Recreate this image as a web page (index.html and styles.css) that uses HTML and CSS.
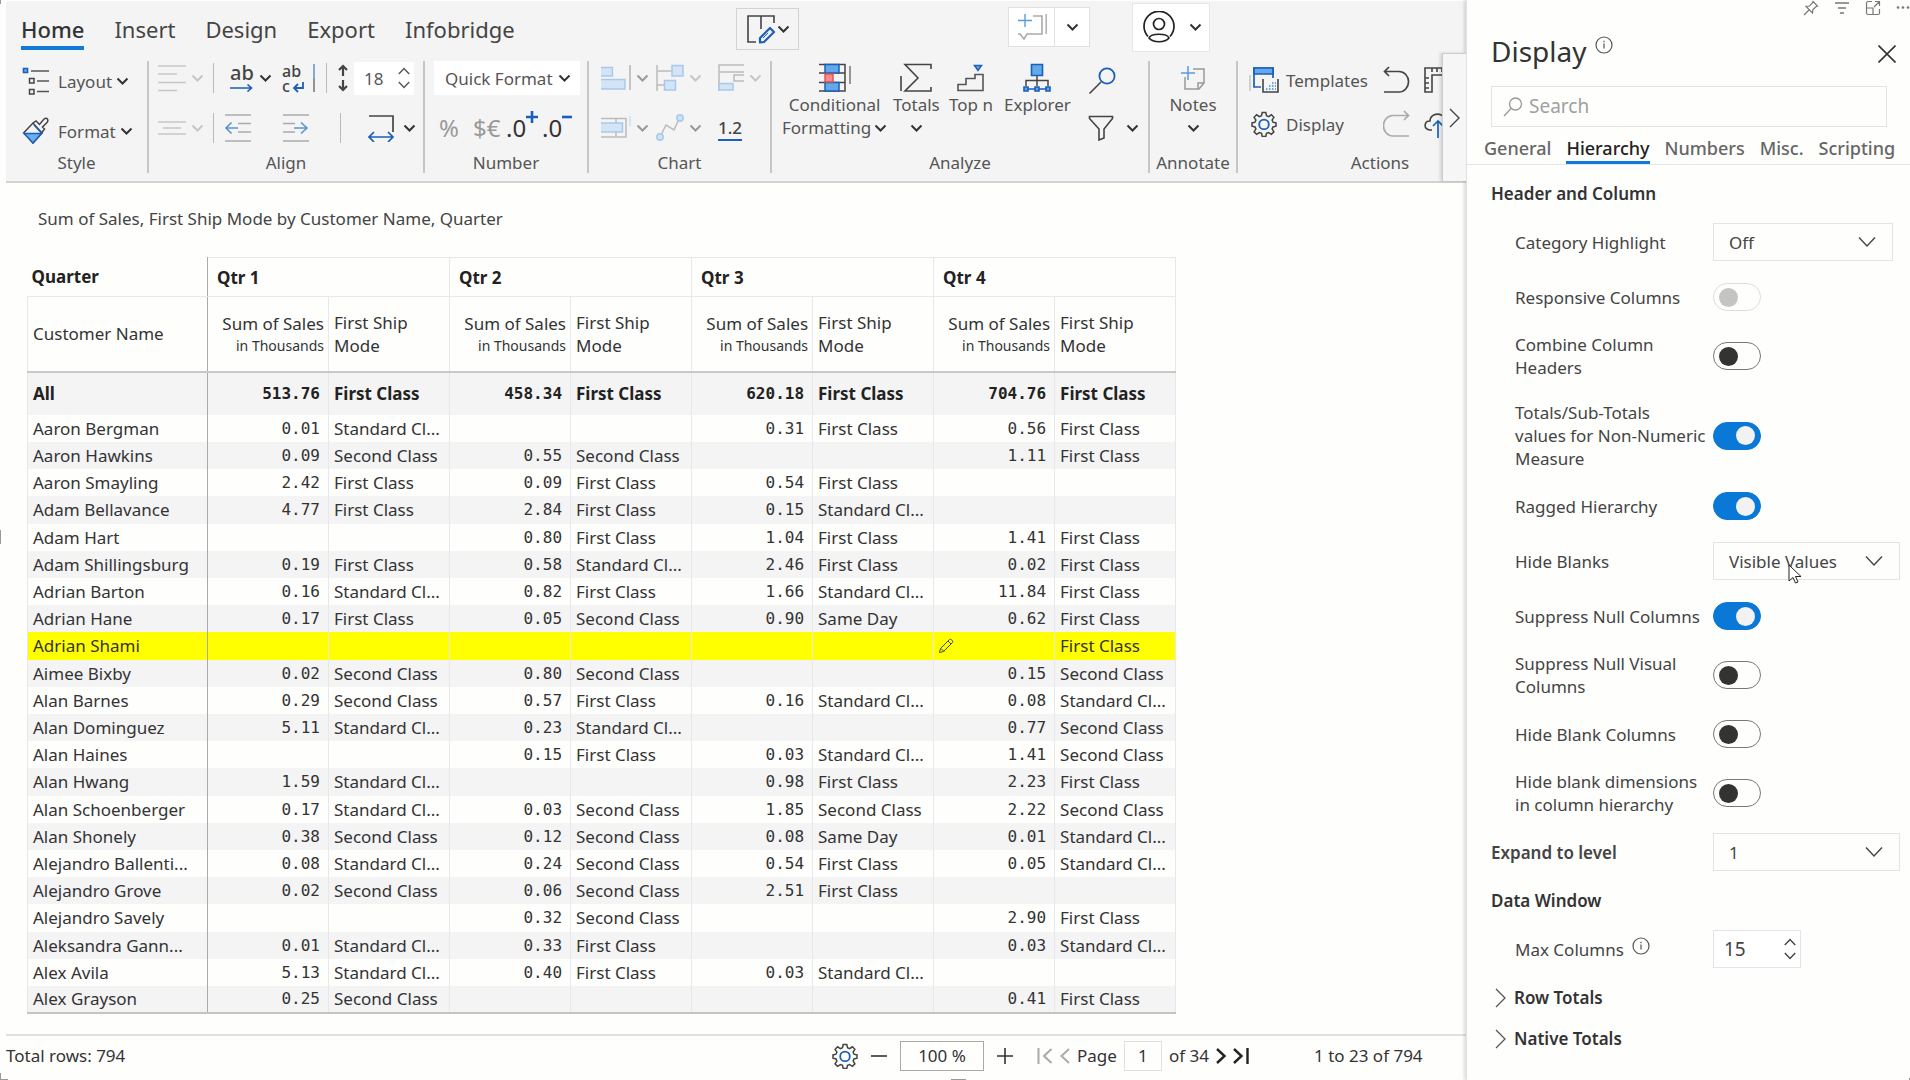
FILE: index.html
```html
<!DOCTYPE html>
<html lang="en">
<head>
<meta charset="utf-8">
<title>Sales matrix</title>
<link rel="stylesheet" href="styles.css">
</head>
<body>
<svg class="defs" aria-hidden="true">
  <symbol id="chev" viewBox="0 0 12 12"><path d="M1 3.5 6 8.5 11 3.5" fill="none" stroke="currentColor" stroke-width="2"/></symbol>
  <symbol id="wide" viewBox="0 0 18 12"><path d="M1 1.5 9 10 17 1.5" fill="none" stroke="currentColor" stroke-width="1.4"/></symbol>
  <symbol id="spin" viewBox="0 0 12 24"><path d="M.8 8 6 2.500 11.200 8M.8 16 6 21.500 11.200 16" fill="none" stroke="currentColor" stroke-width="1.4"/></symbol>
  <symbol id="info" viewBox="0 0 18 18"><g fill="none" stroke="currentColor" stroke-width="1.2"><circle cx="9" cy="9" r="8"/><path d="M9 7.500v5M9 4.800v1.400"/></g></symbol>
  <symbol id="gear" viewBox="0 0 26 26"><path d="M11.200 1.500h3.600l.7 3.200 2.100.9 2.800-1.800 2.500 2.500-1.800 2.800.9 2.100 3 .7v3.300l-3 .7-.9 2.100 1.800 2.800-2.500 2.500-2.800-1.800-2.100.9-.7 3h-3.600l-.7-3-2.100-.9-2.800 1.800-2.500-2.500 1.800-2.800-.9-2.100-3-.7v-3.300l3-.7.9-2.100-1.800-2.800 2.500-2.500 2.800 1.800 2.100-.9z" fill="none" stroke="#444" stroke-width="1.500"/><circle cx="13" cy="13.400" r="4.800" fill="none" stroke="#1a5fb8" stroke-width="1.800"/></symbol>
</svg>

<main class="report">
  <header class="ribbon">
    <div class="topbar">
      <nav class="menu">
        <a href="#" class="active">Home</a><a href="#">Insert</a><a href="#">Design</a><a href="#">Export</a><a href="#">Infobridge</a>
      </nav>
      <button class="edit-mode" aria-label="Edit layout">
        <svg width="30" height="30" viewBox="0 0 30 30" fill="none"><path d="M10 28H2V2h26v7M15 2v13" stroke="#444" stroke-width="1.600"/><path d="m14 24 10-10 4 4-10 10-4 .5z" stroke="#1a5fb8" stroke-width="2.200" stroke-linejoin="round"/><path d="m17 24 5-5" stroke="#1a5fb8"/></svg>
        <svg class="chev"><use href="#chev"/></svg>
      </button>
      <div class="split">
        <button aria-label="Add comment"><svg width="30" height="26" viewBox="0 0 30 26" fill="none"><path d="M16 2h9v18H10l-3 5-4-5H1" stroke="#aaa" stroke-width="1.600"/><path d="M29.200 0v20" stroke="#aaa" stroke-width="1.400"/><path d="M8 0v13M1 6.500h14" stroke="#5a9bdc" stroke-width="1.400"/></svg></button>
        <button aria-label="Comment options"><svg class="chev"><use href="#chev"/></svg></button>
      </div>
      <button class="account" aria-label="Account">
        <svg width="32" height="32" viewBox="0 0 32 32" fill="none" stroke="#222" stroke-width="1.700"><path d="M5 25.500a15 15 0 1 1 22 0"/><circle cx="16" cy="13" r="5.500"/><path d="M6 27c2-5 18-5 20 0-4 5-16 5-20 0z"/></svg>
        <svg class="chev"><use href="#chev"/></svg>
      </button>
    </div>

    <div class="groups">
      <section class="group style">
        <div class="tools">
          <button class="tool"><svg width="28" height="28" viewBox="0 0 28 28" fill="none"><path d="M1.500 1.500h4v4h-4z" fill="#6aaeee" stroke="#1a5fb8" stroke-width="1.600"/><path d="M7.500 11.500h4.500v4.500H7.500zM7.500 22.500h4.500v4.500H7.500z" stroke="#444" stroke-width="1.500"/><path d="M9 4h18M15 14h12M15 24.500h12" stroke="#555" stroke-width="1.500"/></svg><span>Layout</span><svg class="chev"><use href="#chev"/></svg></button>
          <button class="tool"><svg width="28" height="28" viewBox="0 0 28 28" fill="none"><path d="M2 15.500 11 6l9 10-9 10z" stroke="#444" stroke-width="1.500"/><path d="M2 16.500h17.500L11 26z" fill="#6aaeee" stroke="#1a5fb8" stroke-width="1.500"/><path d="m11 6 3-2 3.500 3.500L22 2c3-2 5 1 3 3.500L20.500 10l2 2-3 4" stroke="#444" stroke-width="1.500"/><path d="m12 8 8 8.500" stroke="#1a5fb8" stroke-width="1.500"/></svg><span>Format</span><svg class="chev"><use href="#chev"/></svg></button>
        </div>
        <h2>Style</h2>
      </section>

      <section class="group align">
        <div class="tools">
          <div class="row">
            <button class="tool faint" aria-label="Horizontal align"><svg width="28" height="28" viewBox="0 0 28 28" stroke="currentColor" stroke-width="1.600"><path d="M0 2h28M0 10h19M0 18.500h28M0 26.500h19"/></svg><svg class="chev"><use href="#chev"/></svg></button>
            <i class="rule"></i>
            <button class="tool" aria-label="Text overflow"><span class="letters">ab<svg width="24" height="8" viewBox="0 0 24 8"><path d="M0 4h21M17.500.5l4 3.500-4 3.500" fill="none" stroke="#1a5fb8" stroke-width="1.600"/></svg></span><svg class="chev"><use href="#chev"/></svg></button>
            <button class="tool wrap" aria-label="Wrap text"><span class="letters small">ab<span class="inline">c<svg width="13" height="12" viewBox="0 0 13 12"><path d="M11 1v6H2m4-4-4 4 4 4" fill="none" stroke="#1a5fb8" stroke-width="1.800"/></svg></span></span><svg width="2" height="28" viewBox="0 0 2 28"><path d="M1 0v14" stroke="#1a5fb8"/><path d="M1 14v14" stroke="#333"/></svg></button>
            <i class="rule"></i>
            <svg width="10" height="28" viewBox="0 0 10 28" fill="none" stroke="#444" stroke-width="2.200"><path d="M5 12V2M1 6l4-4 4 4M5 16v10m-4-4 4 4 4-4"/></svg>
            <label class="spinner"><input value="18" aria-label="Row height"><svg width="14" height="24"><use href="#spin"/></svg></label>
          </div>
          <div class="row second">
            <button class="tool faint" aria-label="Vertical align"><svg width="28" height="14" viewBox="0 0 28 14" stroke="currentColor" stroke-width="1.600"><path d="M0 1h28M5 7h18M0 13h28"/></svg><svg class="chev"><use href="#chev"/></svg></button>
            <i class="rule"></i>
            <button class="tool" aria-label="Decrease indent"><svg width="28" height="28" viewBox="0 0 28 28" fill="none" stroke-width="1.600"><path d="M1 1h26M14 9.500h13M14 18h13M1 27h26" stroke="#aaa"/><path d="M14 14H1.500m6-5.500L2 14l5.500 5.500" stroke="#5a93d2"/></svg></button>
            <button class="tool" aria-label="Increase indent"><svg width="28" height="28" viewBox="0 0 28 28" fill="none" stroke-width="1.600"><path d="M1 1h26M1 9.500h12M1 18h12M1 27h26" stroke="#aaa"/><path d="M12 14h13m-6-5.500L25 14l-6 5.500" stroke="#5a93d2"/></svg></button>
            <i class="rule"></i>
            <button class="tool" aria-label="Column width"><svg width="30" height="28" viewBox="0 0 30 28" fill="none" stroke-width="1.700"><path d="M1 2h24v16" stroke="#444"/><path d="M1 23h24M6 18l-5 5 5 5M20 18l5 5-5 5" stroke="#1a5fb8"/></svg><svg class="chev"><use href="#chev"/></svg></button>
          </div>
        </div>
        <h2>Align</h2>
      </section>

      <section class="group number">
        <div class="tools">
          <button class="tool quick">Quick Format <svg class="chev"><use href="#chev"/></svg></button>
          <div class="row">
            <button class="fmt">%</button><button class="fmt">$€</button>
            <button class="fmt dark" aria-label="Add decimal">.0<svg width="12" height="12" viewBox="0 0 12 12" stroke="#1a5fb8" stroke-width="2.600"><path d="M6 0v12M0 6h12"/></svg></button>
            <button class="fmt dark" aria-label="Remove decimal">.0<svg width="10" height="12" viewBox="0 0 10 12" stroke="#1a5fb8" stroke-width="2.600"><path d="M0 6h10"/></svg></button>
          </div>
        </div>
        <h2>Number</h2>
      </section>

      <section class="group chart">
        <div class="tools">
          <div class="row faint">
            <button class="tool mid" aria-label="Bar chart"><svg width="30" height="26" viewBox="0 0 30 26" fill="#d3e4f6" stroke="#a9c8ea" stroke-width="1.400"><path d="M0 2.500h11.500v8.500H0M0 14.500h24V24H0"/><path d="M29 0v25" stroke="#c4c4c4" stroke-width="2"/></svg><svg class="chev"><use href="#chev"/></svg></button>
            <button class="tool" aria-label="Lollipop chart"><svg width="28" height="28" viewBox="0 0 28 28" fill="#d3e4f6"><path d="M1 1v26M1 7h15M1 21h8" stroke="#bbb" stroke-width="1.500"/><path d="M16 1.500h11V12H16zM8.500 16.500h11V26h-11z" stroke="#a9c8ea" stroke-width="1.500"/></svg><svg class="chev"><use href="#chev"/></svg></button>
            <button class="tool" aria-label="Bullet chart"><svg width="26" height="28" viewBox="0 0 26 28" fill="none"><path d="M26 1H1v26M1 8h25M26 11H16v6h10" stroke="#bbb" stroke-width="1.500"/><path d="M1 19.500h14V26H1z" fill="#d3e4f6" stroke="#a9c8ea" stroke-width="1.500"/></svg><svg class="chev"><use href="#chev"/></svg></button>
          </div>
          <div class="row faint">
            <button class="tool mid" aria-label="Range chart"><svg width="30" height="24" viewBox="0 0 30 24" fill="none"><path d="M0 2.500h25V21H0M15 2v18" stroke="#bbb" stroke-width="1.500"/><path d="M0 7h21.500v9H0" fill="#d3e4f6" stroke="#a9c8ea" stroke-width="1.500"/><path d="M29 0v10" stroke="#d3e4f6" stroke-width="2"/></svg><svg class="chev"><use href="#chev"/></svg></button>
            <button class="tool mid" aria-label="Line chart"><svg width="28" height="28" viewBox="0 0 28 28"><path d="m4 23 6-12 8 5 5-11" fill="none" stroke="#bbb" stroke-width="1.500"/><g fill="#cfe2f6" stroke="#a9c8ea" stroke-width="1.500"><circle cx="4" cy="23" r="3.200"/><circle cx="24" cy="4" r="3.200"/></g></svg><svg class="chev"><use href="#chev"/></svg></button>
            <button class="tool decimals">1.2</button>
          </div>
        </div>
        <h2>Chart</h2>
      </section>

      <section class="group analyze">
        <div class="tools">
          <button class="big"><svg width="32" height="30" viewBox="0 0 32 30" fill="none"><path d="M0 1.500h26v26.500H0M0 10h26M0 19.500h26" stroke="#444" stroke-width="1.500"/><path d="M6 1.500h14V10H6zM6 19.500h14V28H6z" fill="#62a8ea" stroke="#1a5fb8" stroke-width="1.500"/><path d="M6 11h8v8H6z" fill="#f88c8c" stroke="#d9534f" stroke-width="1.400"/><path d="M31 3v18" stroke="#777" stroke-width="1.500"/></svg><span>Conditional</span><span class="inline">Formatting<svg class="chev"><use href="#chev"/></svg></span></button>
          <button class="big"><svg width="32" height="30" viewBox="0 0 32 30" fill="none" stroke="#444" stroke-width="1.600"><path d="M31 6V1.500H5L18 15 5 28h26v-4M1 13v15"/></svg><span>Totals</span><span class="inline"><svg class="chev"><use href="#chev"/></svg></span></button>
          <button class="big"><svg width="28" height="30" viewBox="0 0 28 30" fill="none"><path d="M1 27.500v-6h8v-6h9v-4h8v16z" stroke="#555" stroke-width="1.600"/><path d="M17.500 2.500h7l-3.500 5z" fill="#62a8ea" stroke="#1a5fb8" stroke-width="1.500"/></svg><span>Top n</span></button>
          <button class="big"><svg width="28" height="30" viewBox="0 0 28 30"><path d="M14 12v11M3 23v-5.500h22V23" fill="none" stroke="#444" stroke-width="1.500"/><path d="M8.500 1.500h11v11h-11zM1 24h4v4H1zM12 24h4v4h-4zM23 24h4v4h-4zM5 26h7M16 26h7" fill="#62a8ea" stroke="#1a5fb8" stroke-width="1.600"/></svg><span>Explorer</span></button>
          <div class="stack">
            <button class="tool" aria-label="Search"><svg width="28" height="28" viewBox="0 0 28 28" fill="none"><path d="M1.500 26.500 13 15" stroke="#444" stroke-width="1.600"/><circle cx="19" cy="9" r="7.600" stroke="#1a5fb8" stroke-width="1.800"/></svg></button>
            <button class="tool wide-gap" aria-label="Filter"><svg width="26" height="26" viewBox="0 0 26 26" fill="none" stroke="#444" stroke-width="1.600"><path d="M1.500 1.500h23v2L16 14v9l-5 2V14L1.500 3.500z"/></svg><svg class="chev"><use href="#chev"/></svg></button>
          </div>
        </div>
        <h2>Analyze</h2>
      </section>

      <section class="group annotate">
        <div class="tools">
          <button class="big"><svg width="26" height="30" viewBox="0 0 26 30" fill="none" stroke-width="1.500"><path d="M13 6h11v14l-5 6H5V14M24 20h-6v6" stroke="#999"/><path d="M8 3v14M1 10h14" stroke="#5a9bdc"/></svg><span>Notes</span><span class="inline"><svg class="chev"><use href="#chev"/></svg></span></button>
        </div>
        <h2>Annotate</h2>
      </section>

      <section class="group actions">
        <div class="tools">
          <button class="tool"><svg width="30" height="28" viewBox="0 0 30 28" fill="none"><path d="M1 9v16" stroke="#aaa"/><path d="M12 21H5V2h19v10" stroke="#1a5fb8" stroke-width="1.700"/><path d="M5 2h19v6H5z" fill="#62a8ea" stroke="#1a5fb8" stroke-width="1.700"/><path d="M14 13v13h15V13" stroke="#444" stroke-width="1.600"/><path d="M17 23h10M20 20h7M23 17h4" stroke="#62a8ea" stroke-width="1.800" stroke-dasharray="1.500 1.500"/></svg><span>Templates</span></button>
          <button aria-label="Undo" class="tool"><svg width="28" height="28" viewBox="0 0 28 28" fill="none" stroke="#444" stroke-width="1.700"><path d="M6 1 1.500 5.500 6 10M1.500 5.500H16a9.500 10.200 0 0 1 0 20.500H1"/></svg></button>
          <button aria-label="Ruler" class="tool"><svg width="20" height="28" viewBox="0 0 20 28" fill="none" stroke="#444" stroke-width="1.600"><path d="M20 2H2v24h7V9h11M9 2v4M14 2v4M19 2v4M2 12h4M2 17h4M2 22h4"/></svg></button>
          <button class="tool"><svg width="30" height="26" viewBox="-2 0 30 26"><use href="#gear" width="26" height="26"/></svg><span>Display</span></button>
          <button aria-label="Redo" class="tool"><svg width="28" height="28" viewBox="0 0 28 28" fill="none" stroke="#aaa" stroke-width="1.700"><path d="m21 1 4.500 4.500L21 10M25.500 5.500H10a9.500 10.200 0 0 0 0 20.500h16"/></svg></button>
          <button aria-label="Upload" class="tool"><svg width="20" height="28" viewBox="0 0 20 28" fill="none"><path d="M9 20H7c-7-1-6-9 0-9 0-6 7-9 13-5" stroke="#444" stroke-width="1.600"/><path d="M15 28V11m-5 5 5-5 5 5" stroke="#1a5fb8" stroke-width="1.700"/></svg></button>
        </div>
        <h2>Actions</h2>
      </section>
      <button class="more" aria-label="More tools"><svg width="12" height="20" viewBox="0 0 12 20" fill="none" stroke="#444" stroke-width="1.400"><path d="m1 1 9 9-9 9"/></svg></button>
    </div>
  </header>

  <div class="canvas">
    <h1>Sum of Sales, First Ship Mode by Customer Name, Quarter</h1>
    <table>
      <colgroup><col class="name"><col span="8"></colgroup>
      <thead>
        <tr class="quarters"><th>Quarter</th><th colspan="2">Qtr 1</th><th colspan="2">Qtr 2</th><th colspan="2">Qtr 3</th><th colspan="2">Qtr 4</th></tr>
        <tr class="measures"><th>Customer Name</th><th>Sum of Sales<small>in Thousands</small></th><th>First Ship Mode</th><th>Sum of Sales<small>in Thousands</small></th><th>First Ship Mode</th><th>Sum of Sales<small>in Thousands</small></th><th>First Ship Mode</th><th>Sum of Sales<small>in Thousands</small></th><th>First Ship Mode</th></tr>
      </thead>
      <tbody>
        <tr class="all"><td>All</td><td>513.76</td><td>First Class</td><td>458.34</td><td>First Class</td><td>620.18</td><td>First Class</td><td>704.76</td><td>First Class</td></tr>
        <tr><td>Aaron Bergman</td><td>0.01</td><td>Standard Cl...</td><td></td><td></td><td>0.31</td><td>First Class</td><td>0.56</td><td>First Class</td></tr>
        <tr><td>Aaron Hawkins</td><td>0.09</td><td>Second Class</td><td>0.55</td><td>Second Class</td><td></td><td></td><td>1.11</td><td>First Class</td></tr>
        <tr><td>Aaron Smayling</td><td>2.42</td><td>First Class</td><td>0.09</td><td>First Class</td><td>0.54</td><td>First Class</td><td></td><td></td></tr>
        <tr><td>Adam Bellavance</td><td>4.77</td><td>First Class</td><td>2.84</td><td>First Class</td><td>0.15</td><td>Standard Cl...</td><td></td><td></td></tr>
        <tr><td>Adam Hart</td><td></td><td></td><td>0.80</td><td>First Class</td><td>1.04</td><td>First Class</td><td>1.41</td><td>First Class</td></tr>
        <tr><td>Adam Shillingsburg</td><td>0.19</td><td>First Class</td><td>0.58</td><td>Standard Cl...</td><td>2.46</td><td>First Class</td><td>0.02</td><td>First Class</td></tr>
        <tr><td>Adrian Barton</td><td>0.16</td><td>Standard Cl...</td><td>0.82</td><td>First Class</td><td>1.66</td><td>Standard Cl...</td><td>11.84</td><td>First Class</td></tr>
        <tr><td>Adrian Hane</td><td>0.17</td><td>First Class</td><td>0.05</td><td>Second Class</td><td>0.90</td><td>Same Day</td><td>0.62</td><td>First Class</td></tr>
        <tr class="marked"><td>Adrian Shami</td><td></td><td></td><td></td><td></td><td></td><td></td><td><svg class="pencil" width="16" height="16" viewBox="0 0 16 16" fill="none" stroke="#444"><path d="m1.500 14.500 1-4 9-9c1.500-1 4 1.500 3 3l-9 9zM10 3l3 3M3 10.500l3 3"/></svg></td><td>First Class</td></tr>
        <tr><td>Aimee Bixby</td><td>0.02</td><td>Second Class</td><td>0.80</td><td>Second Class</td><td></td><td></td><td>0.15</td><td>Second Class</td></tr>
        <tr><td>Alan Barnes</td><td>0.29</td><td>Second Class</td><td>0.57</td><td>First Class</td><td>0.16</td><td>Standard Cl...</td><td>0.08</td><td>Standard Cl...</td></tr>
        <tr><td>Alan Dominguez</td><td>5.11</td><td>Standard Cl...</td><td>0.23</td><td>Standard Cl...</td><td></td><td></td><td>0.77</td><td>Second Class</td></tr>
        <tr><td>Alan Haines</td><td></td><td></td><td>0.15</td><td>First Class</td><td>0.03</td><td>Standard Cl...</td><td>1.41</td><td>Second Class</td></tr>
        <tr><td>Alan Hwang</td><td>1.59</td><td>Standard Cl...</td><td></td><td></td><td>0.98</td><td>First Class</td><td>2.23</td><td>First Class</td></tr>
        <tr><td>Alan Schoenberger</td><td>0.17</td><td>Standard Cl...</td><td>0.03</td><td>Second Class</td><td>1.85</td><td>Second Class</td><td>2.22</td><td>Second Class</td></tr>
        <tr><td>Alan Shonely</td><td>0.38</td><td>Second Class</td><td>0.12</td><td>Second Class</td><td>0.08</td><td>Same Day</td><td>0.01</td><td>Standard Cl...</td></tr>
        <tr><td>Alejandro Ballenti...</td><td>0.08</td><td>Standard Cl...</td><td>0.24</td><td>Second Class</td><td>0.54</td><td>First Class</td><td>0.05</td><td>Standard Cl...</td></tr>
        <tr><td>Alejandro Grove</td><td>0.02</td><td>Second Class</td><td>0.06</td><td>Second Class</td><td>2.51</td><td>First Class</td><td></td><td></td></tr>
        <tr><td>Alejandro Savely</td><td></td><td></td><td>0.32</td><td>Second Class</td><td></td><td></td><td>2.90</td><td>First Class</td></tr>
        <tr><td>Aleksandra Gann...</td><td>0.01</td><td>Standard Cl...</td><td>0.33</td><td>First Class</td><td></td><td></td><td>0.03</td><td>Standard Cl...</td></tr>
        <tr><td>Alex Avila</td><td>5.13</td><td>Standard Cl...</td><td>0.40</td><td>First Class</td><td>0.03</td><td>Standard Cl...</td><td></td><td></td></tr>
        <tr><td>Alex Grayson</td><td>0.25</td><td>Second Class</td><td></td><td></td><td></td><td></td><td>0.41</td><td>First Class</td></tr>
      </tbody>
    </table>
  </div>

  <footer class="status">
    <span class="total">Total rows: 794</span>
    <div class="zoom">
      <button aria-label="Settings"><svg width="26" height="26"><use href="#gear"/></svg></button>
      <button aria-label="Zoom out"><svg width="16" height="16" viewBox="0 0 16 16" stroke="#333" stroke-width="1.600"><path d="M0 8h16"/></svg></button>
      <input class="percent" value="100 %" aria-label="Zoom level">
      <button aria-label="Zoom in"><svg width="16" height="16" viewBox="0 0 16 16" stroke="#333" stroke-width="1.600"><path d="M0 8h16M8 0v16"/></svg></button>
    </div>
    <div class="pager">
      <button disabled aria-label="First page"><svg width="16" height="16" viewBox="0 0 16 16" fill="none" stroke="#aaa" stroke-width="2"><path d="M1.500 0v16M14.500 1 7 8l7.500 7"/></svg></button>
      <button disabled aria-label="Previous page"><svg width="10" height="16" viewBox="0 0 10 16" fill="none" stroke="#aaa" stroke-width="2"><path d="M9 1 1.500 8 9 15"/></svg></button>
      <label for="page">Page</label><input id="page" value="1"><span>of 34</span>
      <button aria-label="Next page"><svg width="10" height="16" viewBox="0 0 10 16" fill="none" stroke="#222" stroke-width="2.400"><path d="M1 1l7.500 7L1 15"/></svg></button>
      <button aria-label="Last page"><svg width="16" height="16" viewBox="0 0 16 16" fill="none" stroke="#222" stroke-width="2.400"><path d="M14.500 0v16M1 1l7.500 7L1 15"/></svg></button>
    </div>
    <span class="range">1 to 23 of 794</span>
  </footer>
</main>

<aside class="panel">
  <div class="visual-actions">
    <button aria-label="Pin"><svg width="16" height="16" viewBox="0 0 16 16" fill="none" stroke="#777" stroke-width="1.200"><path d="M1 15l5-5M10 1.500 14.500 6l-2 1-2.500 2.500-.5 3.500L3 6.500 6.500 6 9 3.500z"/></svg></button>
    <button aria-label="Filters"><svg width="16" height="16" viewBox="0 0 16 16" stroke="#777" stroke-width="1.300"><path d="M1 3h14M4 8h8M6 13h4"/></svg></button>
    <button aria-label="Focus mode"><svg width="16" height="16" viewBox="0 0 16 16" fill="none" stroke="#777" stroke-width="1.200"><path d="M7 1.500H3q-1.500 0-1.500 1.500v10q0 1.500 1.500 1.500h10q1.500 0 1.500-1.500V9M10 1.500h4.500V6M14.500 1.500 9 7M1.500 8H8v6.500"/></svg></button>
    <button aria-label="More options"><svg width="14" height="16" viewBox="0 0 14 16" fill="#777"><circle cx="2" cy="7.500" r="1.300"/><circle cx="7" cy="7.500" r="1.300"/><circle cx="12" cy="7.500" r="1.300"/></svg></button>
  </div>
  <div class="heading">
    <h2>Display</h2><svg class="info"><use href="#info"/></svg>
    <button aria-label="Close"><svg width="18" height="18" viewBox="0 0 18 18" stroke="#333" stroke-width="1.600"><path d="m.5.500 17 17m0-17-17 17"/></svg></button>
  </div>
  <label class="search">
    <svg width="20" height="20" viewBox="0 0 20 20" fill="none" stroke="#999" stroke-width="1.300"><circle cx="12.500" cy="7" r="6"/><path d="M8 11.500 1 19"/></svg>
    <input type="search" placeholder="Search" aria-label="Search">
  </label>
  <nav class="tabs"><a href="#">General</a><a href="#" class="active">Hierarchy</a><a href="#">Numbers</a><a href="#">Misc.</a><a href="#">Scripting</a></nav>

  <form class="settings">
    <h3>Header and Column</h3>
    <div class="field"><label for="cat">Category Highlight</label><span class="select short"><select id="cat"><option>Off</option></select><svg width="18" height="12"><use href="#wide"/></svg></span></div>
    <div class="field"><label for="resp">Responsive Columns</label><input type="checkbox" id="resp" disabled></div>
    <div class="field"><label for="comb">Combine Column<br>Headers</label><input type="checkbox" id="comb"></div>
    <div class="field"><label for="tot">Totals/Sub-Totals<br>values for Non-Numeric<br>Measure</label><input type="checkbox" id="tot" checked></div>
    <div class="field"><label for="rag">Ragged Hierarchy</label><input type="checkbox" id="rag" checked></div>
    <div class="field"><label for="blank">Hide Blanks</label><span class="select"><select id="blank"><option>Visible Values</option></select><svg width="18" height="12"><use href="#wide"/></svg></span></div>
    <div class="field"><label for="nul">Suppress Null Columns</label><input type="checkbox" id="nul" checked></div>
    <div class="field"><label for="nulv">Suppress Null Visual<br>Columns</label><input type="checkbox" id="nulv"></div>
    <div class="field"><label for="hbc">Hide Blank Columns</label><input type="checkbox" id="hbc"></div>
    <div class="field"><label for="hbd">Hide blank dimensions<br>in column hierarchy</label><input type="checkbox" id="hbd"></div>
    <div class="field top"><label for="lvl">Expand to level</label><span class="select"><select id="lvl"><option>1</option></select><svg width="18" height="12"><use href="#wide"/></svg></span></div>
    <h3>Data Window</h3>
    <div class="field"><label for="max" class="with-info">Max Columns <svg class="info"><use href="#info"/></svg></label><span class="spinner boxed"><input id="max" value="15"><svg width="14" height="24"><use href="#spin"/></svg></span></div>
    <div class="folds">
      <button type="button"><svg width="11" height="20" viewBox="0 0 11 20" fill="none" stroke="#555" stroke-width="1.300"><path d="m1 1 9 9-9 9"/></svg>Row Totals</button>
      <button type="button"><svg width="11" height="20" viewBox="0 0 11 20" fill="none" stroke="#555" stroke-width="1.300"><path d="m1 1 9 9-9 9"/></svg>Native Totals</button>
    </div>
  </form>
</aside>

<i class="handle tl"></i><i class="handle ml"></i><i class="handle bl"></i><i class="handle bm"></i><i class="handle br"></i>
<svg class="cursor" width="14" height="20" viewBox="0 0 14 20"><path d="M1 1v16l4-3.500 2.500 5.500 2.500-1-2.500-5.500H13z" fill="#fff" stroke="#222"/></svg>
</body>
</html>
```
FILE: styles.css
```css
* { box-sizing: border-box; }
body {
  margin: 0;
  min-height: 100vh;
  display: flex;
  position: relative;
  background: #fefefd;
  color: #444;
  font: 17px/23px "Noto Sans", "Open Sans", sans-serif;
}
.defs { position: absolute; width: 0; height: 0; }
button, input, select { font: inherit; color: inherit; border: 0; padding: 0; margin: 0; background: none; border-radius: 0; }
a { color: inherit; text-decoration: none; }
h1, h2, h3 { margin: 0; font-size: 17px; font-weight: 400; }
svg { display: block; flex: none; }
.chev { width: 13px; height: 12px; color: #333; }

/* report column */
.report { flex: 1; min-width: 0; padding: 1px 0 5px 6px; display: flex; flex-direction: column; }
.ribbon { background: #f4f4f4; border-bottom: 2px solid #d3d3d5; height: 182px; display: flex; flex-direction: column; }
.topbar { display: grid; grid-template-columns: 730px 272px 124px 1fr; align-items: center; height: 52px; }
.menu { display: flex; gap: 30px; padding-left: 15px; font-size: 22px; align-self: start; }
.menu a { height: 49px; line-height: 56px; }
.menu .active { font-weight: 500; color: #333; border-bottom: 4px solid #0f7ad8; }
.edit-mode { display: flex; align-items: center; gap: 1px; width: 63px; height: 42px; padding-left: 9px; border: 1px solid #d3d3d3; margin-top: 4px; }
.split { display: flex; width: 82px; height: 40px; background: #fff; border: 1px solid #e0e0e0; }
.split button { flex: 1; display: grid; place-items: center; }
.split button + button { flex: none; width: 35px; border-left: 1px solid #e0e0e0; }
.account { display: flex; align-items: center; gap: 14px; width: 78px; height: 49px; padding-left: 10px; background: #fff; border: 1px solid #e6e6e6; }

.groups { flex: 1; display: flex; min-height: 0; }
.group { flex: none; margin: 8px 0 7px; height: 112px; border-right: 2px solid #c6c6c6; display: flex; flex-direction: column; justify-content: space-between; color: #555; }
.group h2 { text-align: center; line-height: 20px; }
.tools { height: 84px; display: grid; grid-template-rows: 34px 34px; gap: 16px 0; align-content: start; }
.row { display: grid; align-items: center; }
.tool { display: flex; align-items: center; gap: 5px; text-align: left; white-space: nowrap; }
.faint, .faint .chev { color: #c6c6c6; }
.faint .mid .chev { color: #999; }
.rule { width: 1px; height: 30px; background: #bbb; }
.letters { font-size: 20px; line-height: 18px; font-weight: 500; color: #444; }
.letters svg { margin-top: 2px; }
.letters.small { font-size: 16px; line-height: 16px; }
.letters .inline { height: 14px; gap: 2px; }
.wrap { gap: 8px; }
.style { width: 143px; }
.style .tools { padding: 3px 0 0 16px; }
.style .tool { gap: 8px; }
.style .tool .chev { margin-left: -4px; }
.align { width: 276px; }
.align .tools { padding-left: 9px; }
.align .row { grid-template-columns: 55px 17px 52px 44px 12px 16px 60px; }
.align .second { grid-template-columns: 55px 11px 58px 58px 28px 50px; }
.spinner { display: flex; align-items: center; justify-content: space-between; width: 60px; height: 33px; padding: 0 3px 0 10px; background: #fff; }
.spinner input { width: 30px; }
.number { width: 164px; }
.number .tools { padding-left: 9px; }
.quick { background: #fff; width: 146px; padding-left: 11px; }
.number .row { grid-template-columns: 34px 33px 36px 30px; padding-left: 5px; }
.fmt { display: flex; font-size: 24px; line-height: 34px; color: #999; text-align: left; }
.fmt.dark { color: #333; }
.chart { width: 183px; }
.chart .tools { padding-left: 12px; }
.chart .row { grid-template-columns: 55px 62px 46px; }
.decimals { color: #444; font-weight: 500; border-bottom: 2px solid #1a5fb8; justify-self: start; }
.analyze { width: 378px; }
.analyze .tools { padding-left: 10px; grid-template: 84px / 111px 56px 55px 84px 51px; justify-items: start; }
.big { display: flex; flex-direction: column; align-items: center; padding-top: 2px; }
.inline { display: flex; align-items: center; gap: 3px; height: 23px; }
.stack { display: grid; grid-template-rows: 40px 34px; gap: 10px; }
.wide-gap { gap: 12px; }
.annotate { width: 88px; }
.annotate .tools { grid-template: 84px / 1fr; }
.actions { flex: 1; min-width: 0; border-right: 0; overflow: hidden; }
.actions .tools { padding: 2px 0 0 11px; grid-template-columns: 134px 40px 20px; row-gap: 10px; }
.actions .tool { gap: 7px; }
.actions h2 { padding-left: 80px; }
.more { width: 24px; background: #f6f6f6; border: 1px solid #ccc; border-width: 1px 0 0 1px; box-shadow: -2px 0 3px #0002; display: grid; place-items: center; position: relative; }

.canvas { flex: 1; padding: 24px 21px 20px; }
.canvas h1 { padding-left: 11px; }
table { margin-top: 27px; border-collapse: collapse; table-layout: fixed; width: 1148px; color: #333; border-bottom: 2px solid #c4c4c4; }
col { width: 121px; }
col.name { width: 180px; }
th, td { padding: 0 0 0 5px; text-align: left; font-weight: 400; white-space: nowrap; border: 1px solid #e8e8ea; border-width: 0 1px; }
td:first-child, th:first-child { border-right: 1px solid #aaa; }
.quarters th { height: 39px; font-weight: 700; border-width: 1px; padding-left: 9px; color: #222; }
.quarters th:first-child { border-left: 0; border-top: 0; padding-left: 4px; }
.measures th { height: 75px; white-space: normal; border-bottom: 2px solid #c8c8c8; }
.measures th:nth-child(even) { text-align: right; padding: 2px 4px 0 0; white-space: nowrap; }
small { display: block; font-size: 14px; line-height: 22px; }
tbody tr { height: 27px; }
tbody tr:nth-child(5n) { height: 28px; }
tbody tr:nth-child(odd) { background: #f4f4f5; }
tbody td:nth-child(even) { font-family: "DejaVu Sans Mono", monospace; font-size: 16px; text-align: right; padding: 0 8px 0 0; }
tbody .all { height: 43px; color: #222; }
tbody .all td { font-weight: 700; }
tbody .marked { background: #ff0; }
.pencil { margin-left: 4px; }

.status { border-top: 2px solid #e0e0e0; height: 41px; display: grid; grid-template-columns: 1fr 205px 277px 152px; align-items: center; color: #333; }
.zoom, .pager { display: flex; align-items: center; }
.zoom { gap: 13px; }
.percent { width: 84px; height: 30px; border: 1px solid #aaa; text-align: center; }
.pager { gap: 7px; }
.pager input { width: 38px; height: 30px; border: 1px solid #e0e0e0; text-align: center; }

/* settings panel */
.panel { flex: none; width: 444px; border-left: 1px solid #e2e2e4; box-shadow: -2px 0 3px #0002; padding-bottom: 16px; }
.visual-actions { display: flex; justify-content: flex-end; gap: 15px; height: 16px; }
.heading { display: flex; align-items: center; padding: 0 14px 0 24px; height: 70px; }
.heading h2 { font-size: 28px; line-height: 38px; color: #333; }
.info { width: 18px; height: 18px; margin: 0 0 12px 8px; color: #555; }
.heading button { margin-left: auto; padding-top: 6px; }
.search { display: flex; align-items: center; gap: 6px; height: 41px; margin: 0 23px 0 24px; padding-left: 11px; border: 1px solid #e4e4e8; font-size: 19px; }
.search input { flex: 1; outline: 0; }
.search input::placeholder { color: #a0a0a0; }
.tabs { display: flex; gap: 15px; padding-left: 17px; margin-top: 8px; height: 30px; border-bottom: 1px solid #e6e6e8; font-size: 18px; line-height: 26px; font-weight: 500; color: #666; }
.tabs .active { color: #222; border-bottom: 3px solid #0f7ad8; }
.settings { display: flex; flex-direction: column; gap: 22px; padding: 17px 10px 0 24px; }
.settings h3 { font-weight: 600; color: #333; }
.settings h3:first-child { margin-bottom: -4px; }
.field { display: grid; grid-template-columns: 198px 1fr; align-items: center; padding-left: 24px; white-space: nowrap; }
.with-info { display: flex; align-items: center; }
.field .info { margin-bottom: 6px; }
.top { grid-template-columns: 222px 1fr; padding-left: 0; font-weight: 600; margin-top: -5px; }
.top select { font-weight: 400; }
.top + h3 { margin-top: -4px; }
.top + h3 + .field { margin-top: -4px; }
.select { display: grid; grid-template-columns: 1fr 34px; align-items: center; height: 38px; border: 1px solid #e4e4e8; }
.short { width: 180px; }
.select select { grid-area: 1 / 1 / 2 / 3; width: 100%; height: 36px; padding-left: 15px; appearance: none; outline: 0; }
.select svg { grid-area: 1 / 2; pointer-events: none; }
.field input[type="checkbox"] { appearance: none; width: 48px; height: 28px; border: 1px solid #777; border-radius: 14px; display: flex; align-items: center; padding: 0 5px; }
.field input[type="checkbox"]::before { content: ""; width: 19px; height: 19px; border-radius: 50%; background: #333; }
.field input:checked { background: #0a78d6; border-color: #0a78d6; justify-content: flex-end; }
.field input:checked::before { background: #f2f2f2; }
.field input:disabled { border-color: #ddd; }
.field input:disabled::before { background: #c4c4c4; }
.boxed { width: 88px; height: 38px; border: 1px solid #e4e4e8; font-size: 19px; }
.folds { display: grid; gap: 18px; margin-top: -4px; }
.folds button { display: flex; align-items: center; gap: 8px; padding-left: 4px; height: 23px; font-weight: 600; color: #333; }

/* frame handles and pointer lie over the page */
.handle { position: absolute; border: 0 solid #999; }
.tl { left: 0; top: 0; height: 4px; border-left-width: 1px; }
.ml { left: 0; top: 530px; height: 14px; border-left-width: 1px; }
.bl { left: 0; bottom: 0; width: 8px; height: 7px; border-width: 0 0 1px 1px; }
.bm { left: 951px; bottom: 0; width: 15px; border-bottom-width: 1px; }
.br { right: 0; bottom: 0; height: 2px; border-left-width: 1px; }
.cursor { position: absolute; left: 1788px; top: 564px; }
```
